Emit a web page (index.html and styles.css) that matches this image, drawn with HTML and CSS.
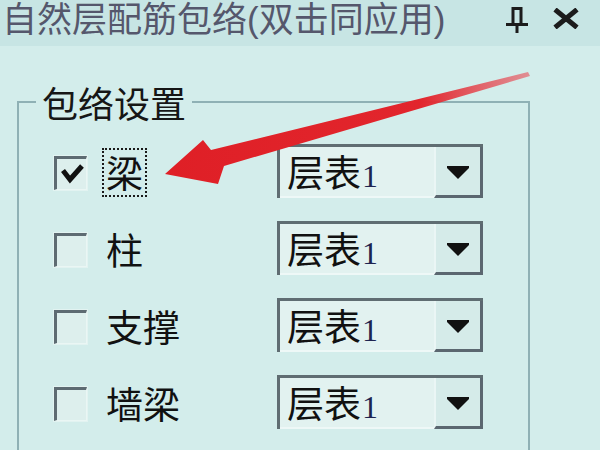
FILE: index.html
```html
<!DOCTYPE html>
<html lang="zh-CN">
<head>
<meta charset="utf-8">
<title>自然层配筋包络</title>
<link rel="stylesheet" href="styles.css">
</head>
<body>
<div class="panel">
  <div class="titlebar">
    <span class="title">自然层配筋包络(双击同应用)</span>
    <svg class="pin" width="22" height="26" viewBox="0 0 22 26">
      <path d="M5.5 1.5h11M7 1.5v16M15 1.5v16M0 17.5h22M11 17.5v8.5" stroke="#1c1c1c" stroke-width="3" fill="none"/>
    </svg>
    <svg class="close" width="26" height="21" viewBox="0 0 26 21">
      <path d="M2 1.5l22 18M24 1.5l-22 18" stroke="#1c1c1c" stroke-width="5" fill="none"/>
    </svg>
  </div>
  <fieldset class="group">
    <legend class="legend">包络设置</legend>
    <div class="rows">
      <div class="row">
        <span class="check">
          <svg width="30" height="30" viewBox="0 0 30 30"><path d="M6 11.5l7 9L25 7" stroke="#111" stroke-width="5" fill="none"/></svg>
        </span>
        <span class="label focus">梁</span>
        <div class="combo">
          <span class="combo-text">层表<span class="num">1</span></span>
          <span class="combo-btn"><svg width="22" height="13" viewBox="0 0 22 13"><path d="M0 0h22v2L11 13 0 2z" fill="#111"/></svg></span>
        </div>
      </div>
      <div class="row">
        <span class="check"></span>
        <span class="label">柱</span>
        <div class="combo">
          <span class="combo-text">层表<span class="num">1</span></span>
          <span class="combo-btn"><svg width="22" height="13" viewBox="0 0 22 13"><path d="M0 0h22v2L11 13 0 2z" fill="#111"/></svg></span>
        </div>
      </div>
      <div class="row">
        <span class="check"></span>
        <span class="label">支撑</span>
        <div class="combo">
          <span class="combo-text">层表<span class="num">1</span></span>
          <span class="combo-btn"><svg width="22" height="13" viewBox="0 0 22 13"><path d="M0 0h22v2L11 13 0 2z" fill="#111"/></svg></span>
        </div>
      </div>
      <div class="row">
        <span class="check"></span>
        <span class="label">墙梁</span>
        <div class="combo">
          <span class="combo-text">层表<span class="num">1</span></span>
          <span class="combo-btn"><svg width="22" height="13" viewBox="0 0 22 13"><path d="M0 0h22v2L11 13 0 2z" fill="#111"/></svg></span>
        </div>
      </div>
    </div>
  </fieldset>
  <svg class="arrow" width="600" height="450" viewBox="0 0 600 450">
    <defs>
      <linearGradient id="ag" x1="165" y1="0" x2="530" y2="0" gradientUnits="userSpaceOnUse">
        <stop offset="0" stop-color="#df1f26"/>
        <stop offset="0.7" stop-color="#e2262d"/>
        <stop offset="1" stop-color="#e8505a" stop-opacity="0.6"/>
      </linearGradient>
    </defs>
    <polygon points="165,174 203,140 211,150 528,72 530,76 224,166 218,184" fill="url(#ag)"/>
  </svg>
</div>
</body>
</html>
```

FILE: styles.css
```css
html, body {
  margin: 0;
  padding: 0;
  width: 600px;
  height: 450px;
  overflow: hidden;
  background: #d3edeb;
}

.panel {
  position: relative;
  width: 600px;
  height: 450px;
  overflow: hidden;
  background: #d3edeb;
  font-family: "Noto Sans CJK SC", "Noto Sans", sans-serif;
}

.titlebar {
  display: flex;
  align-items: flex-start;
  height: 46px;
  padding: 2px 21px 0 2px;
  box-sizing: border-box;
  background: #c7e5e4;
}

.title {
  margin: 0;
  font-family: "Liberation Sans", "Noto Sans CJK SC", sans-serif;
  font-size: 35px;
  line-height: 36px;
  color: #55576c;
  white-space: nowrap;
}

.pin {
  margin-left: auto;
  margin-top: 5px;
}

.close {
  margin-left: 25px;
  margin-top: 6px;
}

.group {
  box-sizing: border-box;
  width: 513px;
  height: 520px;
  margin: 36px 0 0 17px;
  padding: 0;
  border: 2px solid #8fb1b5;
  min-width: 0;
}

.legend {
  margin-left: 17px;
  padding: 0 6px;
  font-size: 36px;
  line-height: 40px;
  color: #161616;
}

.rows {
  display: flex;
  flex-direction: column;
  padding: 12px 45px 0 35px;
}

.row {
  display: flex;
  align-items: center;
  height: 77px;
}

.check {
  box-sizing: border-box;
  width: 33px;
  height: 34px;
  flex: none;
  background: #ddefed;
  border-top: 3px solid #5d6b72;
  border-left: 3px solid #5d6b72;
  border-right: 1px solid #eaf6f4;
  border-bottom: 1px solid #eaf6f4;
  box-shadow: 0 0 0 1px #e2f3f1;
}

.check svg {
  display: block;
}

.label {
  margin-left: 15px;
  padding: 0 2px;
  border: 2px dotted transparent;
  font-size: 37px;
  line-height: 45px;
  color: #111;
  white-space: nowrap;
}

.label.focus {
  border-color: #1a1a1a;
}

.combo {
  box-sizing: border-box;
  display: flex;
  width: 206px;
  height: 54px;
  margin-left: auto;
  margin-top: -4px;
  border-top: 3px solid #5f6d72;
  border-left: 3px solid #5f6d72;
  background: #e2f2f0;
}

.combo-text {
  flex: 1;
  padding-left: 7px;
  font-size: 37px;
  line-height: 49px;
  color: #111;
  border-bottom: 2px solid #eef8f7;
  white-space: nowrap;
}

.num {
  font-family: "Liberation Serif", serif;
  font-size: 32px;
  color: #1e2450;
  margin-left: 1px;
}

.combo-btn {
  box-sizing: border-box;
  display: flex;
  align-items: center;
  justify-content: center;
  width: 49px;
  padding-top: 4px;
  background: #d5ebe9;
  border-left: 2px solid #eaf6f5;
  border-right: 3px solid #5b6770;
  border-bottom: 3px solid #5b6770;
}

.arrow {
  position: absolute;
  left: 0;
  top: 0;
  pointer-events: none;
}
```
